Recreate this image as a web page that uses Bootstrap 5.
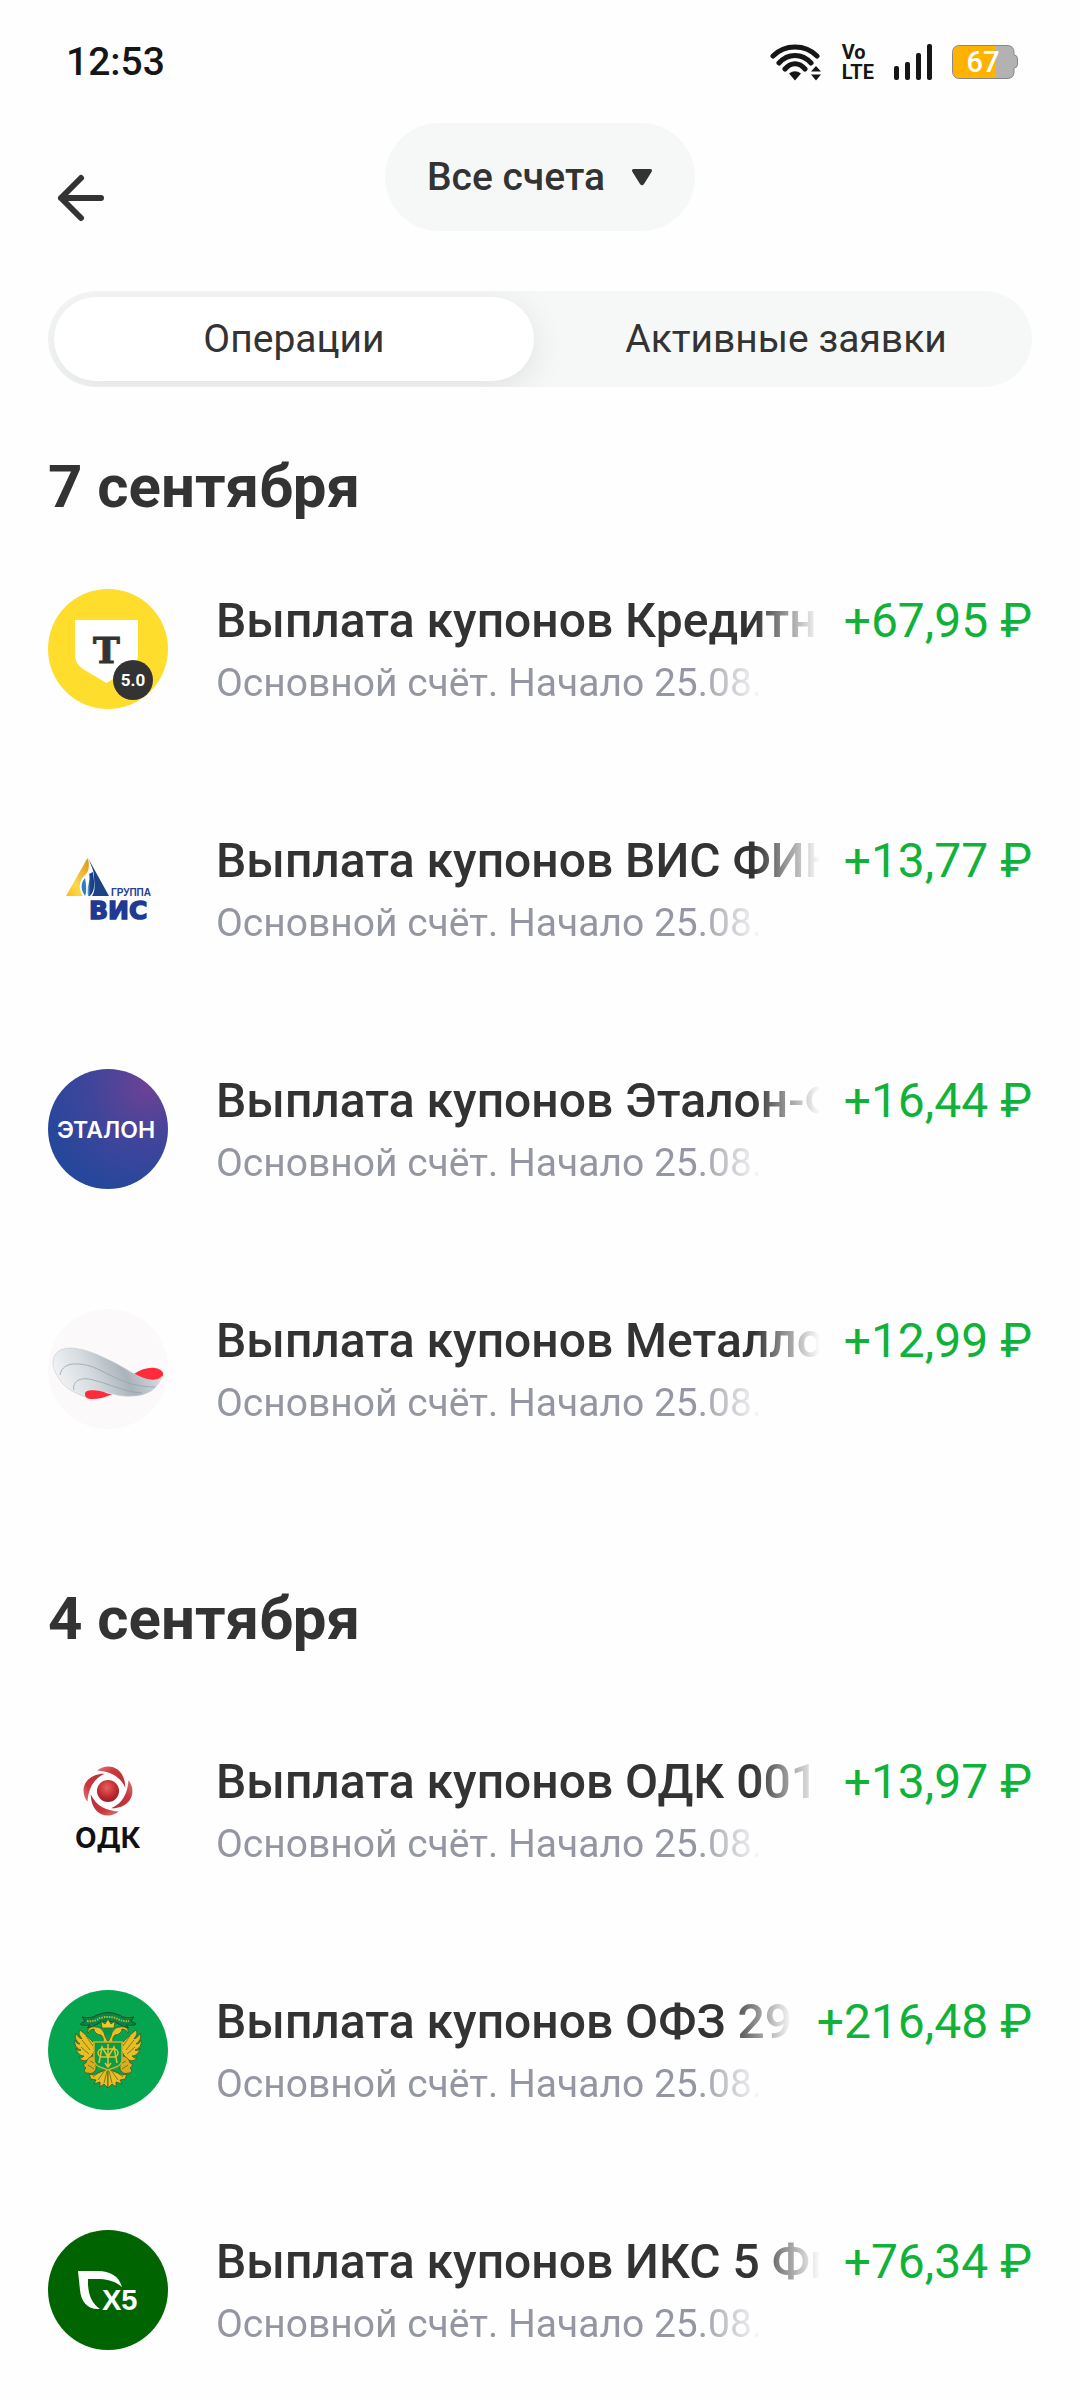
<!DOCTYPE html>
<html lang="ru">
<head>
    <meta charset="UTF-8">
    <meta name="viewport" content="width=device-width, initial-scale=1.0">
    <title>Операции</title>
    <link href="https://cdn.jsdelivr.net/npm/bootstrap@5.3.0/dist/css/bootstrap.min.css" rel="stylesheet">
    <style>
        body {
            font-family: Roboto, "Liberation Sans", sans-serif;
            font-size: 39px;
            line-height: 48px;
            color: #333;
            background: #fefefe;
        }
        .status-bar {
            padding: 38px 62px 0 66px;
            color: #161616;
        }
        .status-icons {
            gap: 20px;
        }
        .volte {
            font: bold 20px/20px Roboto, sans-serif;
        }
        .top-bar {
            display: grid;
            grid-template-columns: 1fr auto 1fr;
            padding: 37px 48px 0;
        }
        .back-btn {
            width: 66px;
            height: 66px;
        }
        .account-btn {
            height: 108px;
            padding: 0 42px;
            gap: 26px;
            font-size: 39px;
            background: #f6f8f8;
        }
        .account-btn, .back-btn, .tab-btn {
            color: #333;
            border: 0;
        }
        .tab-track {
            margin: 60px 48px 0;
            background: #f6f8f8;
        }
        .tab-btn {
            height: 84px;
            margin: 6px;
            font-size: 39px;
        }
        .tab-btn.active {
            color: #333;
            background: #fff;
            border: 0;
            box-shadow: 0 8px 36px rgba(0, 0, 0, .09);
        }
        .day-group {
            padding: 64px 48px 0;
        }
        .day-group h2 {
            margin-bottom: 66px;
            font-size: 60px;
            line-height: 72px;
        }
        .day-group + .day-group {
            padding-top: 150px;
        }
        .day-group + .day-group h2 {
            margin-bottom: 95px;
        }
        .operations {
            gap: 116px;
        }
        .operation {
            gap: 48px;
        }
        .avatar {
            width: 120px;
            height: 120px;
        }
        .op-head {
            gap: 24px;
            font-size: 48px;
            line-height: 64px;
        }
        .op-account {
            width: 67%;
            line-height: 60px;
            color: #9497a1;
        }
        .fade-end {
            -webkit-mask-image: linear-gradient(to left, transparent, #000 66px);
            mask-image: linear-gradient(to left, transparent, #000 66px);
        }
        .amount {
            color: #10b23a;
        }
    </style>
</head>
<body>
    <div class="status-bar d-flex justify-content-between align-items-center">
        <div class="fw-medium">12:53</div>
        <div class="status-icons d-flex align-items-center">
            <svg width="52" height="37" viewBox="0 0 52 37" fill="none" stroke="#161616" stroke-width="5" stroke-linecap="round">
                <path d="M3 12C15 0 35 0 47 12M9 19C18 9 32 9 41 19M15 25C21 18 29 18 35 25"/>
                <path d="M19 29.5Q25 25 31 29.5L25 36.5Z" fill="#161616" stroke="none"/>
                <path d="M41 27.5L46 22L51 27.5ZM41 30.5H51L46 36.5Z" fill="#161616" stroke="none"/>
            </svg>
            <div class="volte">Vo<br>LTE</div>
            <svg width="38" height="36" viewBox="0 0 38 36" fill="#161616">
                <rect x="0" y="22" width="5" height="14" rx="2"/>
                <rect x="11" y="18" width="5" height="18" rx="2"/>
                <rect x="22" y="9" width="5" height="27" rx="2"/>
                <rect x="33" y="0" width="5" height="36" rx="2"/>
            </svg>
            <svg width="66" height="36" viewBox="0 0 66 36">
                <path d="M8 1.5H55Q62 1.5 62 8.5V11Q65.500 11 65.500 15V20Q65.500 24 62 24V28Q62 34.500 55 34.500H8Q.5 34.500 .5 27V8.500Q.5 1.500 8 1.500Z" fill="#b2b2b2" stroke="#888"/>
                <path d="M44 2H8Q1 2 1 9V27Q1 34 8 34H44Z" fill="#ffb300"/>
                <text x="31" y="28" text-anchor="middle" font-family="Roboto" font-size="29" font-weight="500" fill="#fff">67</text>
            </svg>
        </div>
    </div>

    <header class="top-bar align-items-end">
        <button type="button" class="back-btn bg-transparent p-0 d-flex align-items-center justify-content-center" aria-label="Назад">
            <svg width="50" height="50" viewBox="0 0 50 50" fill="none" stroke="#333" stroke-width="6" stroke-linecap="round" stroke-linejoin="round">
                <path d="M45 25H5M25 5L5 25L25 45"/>
            </svg>
        </button>
        <button type="button" class="account-btn btn rounded-pill d-flex align-items-center fw-medium">
            Все счета
            <svg width="22" height="18" viewBox="0 0 22 18" fill="#333"><path d="M3 1H19Q22 1 20.500 4L13 16Q11 18.500 9 16L1.500 4Q0 1 3 1Z"/></svg>
        </button>
    </header>

    <div class="tab-track d-flex rounded-pill overflow-hidden" role="tablist">
        <button type="button" class="tab-btn active btn rounded-pill flex-fill w-50 p-0" role="tab" aria-selected="true">Операции</button>
        <button type="button" class="tab-btn btn rounded-pill flex-fill w-50 p-0" role="tab" aria-selected="false">Активные заявки</button>
    </div>

    <main>
        <section class="day-group">
            <h2 class="fw-bold">7 сентября</h2>
            <ul class="operations list-unstyled d-flex flex-column mb-0">
                <li class="operation d-flex">
                    <svg class="avatar flex-shrink-0" viewBox="0 0 120 120">
                        <circle cx="60" cy="60" r="60" fill="#ffdd2d"/>
                        <path d="M27 31H90V66Q90 75 82 80L58.500 94L35 80Q27 75 27 66Z" fill="#fff"/>
                        <text x="58.500" y="74" text-anchor="middle" font-family="DejaVu Serif" font-size="36" font-weight="bold" fill="#333" stroke="#333">Т</text>
                        <circle cx="85" cy="91" r="20" fill="#333"/>
                        <text x="85" y="97" text-anchor="middle" font-family="Roboto" font-size="17" font-weight="bold" fill="#fff">5.0</text>
                    </svg>
                    <div class="flex-grow-1 overflow-hidden">
                        <div class="op-head d-flex">
                            <div class="fade-end flex-grow-1 overflow-hidden text-nowrap fw-medium">Выплата купонов Кредитн</div>
                            <div class="amount text-nowrap">+67,95 ₽</div>
                        </div>
                        <div class="op-account fade-end overflow-hidden text-nowrap">Основной счёт. Начало 25.08.</div>
                    </div>
                </li>
                <li class="operation d-flex">
                    <svg class="avatar flex-shrink-0" viewBox="0 0 120 120">
                        <defs>
                            <linearGradient id="visGold" x1="0" y1="1" x2="1" y2="0">
                                <stop offset="0" stop-color="#fdb813"/><stop offset=".35" stop-color="#ffd94a"/><stop offset="1" stop-color="#d9931c"/>
                            </linearGradient>
                            <linearGradient id="visBlue" x1="0" y1="0" x2="1" y2="0">
                                <stop offset="0" stop-color="#7cc0e8"/><stop offset=".4" stop-color="#1b4a92"/><stop offset="1" stop-color="#153a80"/>
                            </linearGradient>
                        </defs>
                        <path d="M39.500 29L18 67H35C29 58 32 50 38 45C41 42 42 36 39.500 29Z" fill="url(#visGold)"/>
                        <path d="M40 29L61 67H44C48 61 46 55 46 47C46 42 43 36 40 29Z" fill="#1b4386"/>
                        <path d="M37 49C32 55 33 61 37 67C39 62 38 55 37 49Z" fill="#2c7fc0"/>
                        <path d="M41 45C43 52 38 58 40 67H42C48 61 46 52 45 43Z" fill="url(#visBlue)"/>
                        <text x="63" y="67" font-family="Liberation Sans" font-size="10" font-weight="bold" fill="#26408f">ГРУППА</text>
                        <text x="41" y="90" font-family="DejaVu Sans" font-size="25" font-weight="bold" fill="#1f3a93" stroke="#1f3a93" stroke-width="1.500">ВИС</text>
                    </svg>
                    <div class="flex-grow-1 overflow-hidden">
                        <div class="op-head d-flex">
                            <div class="fade-end flex-grow-1 overflow-hidden text-nowrap fw-medium">Выплата купонов ВИС ФИН</div>
                            <div class="amount text-nowrap">+13,77 ₽</div>
                        </div>
                        <div class="op-account fade-end overflow-hidden text-nowrap">Основной счёт. Начало 25.08.</div>
                    </div>
                </li>
                <li class="operation d-flex">
                    <svg class="avatar flex-shrink-0" viewBox="0 0 120 120">
                        <defs>
                            <radialGradient id="etalonSky" cx=".82" cy=".15" r=".9">
                                <stop offset="0" stop-color="#6b4295"/><stop offset=".5" stop-color="#41459a"/><stop offset="1" stop-color="#26479b"/>
                            </radialGradient>
                        </defs>
                        <circle cx="60" cy="60" r="60" fill="url(#etalonSky)"/>
                        <text x="58" y="69" text-anchor="middle" font-family="Inter" font-size="23" font-weight="600" fill="#fff">ЭТАЛОН</text>
                    </svg>
                    <div class="flex-grow-1 overflow-hidden">
                        <div class="op-head d-flex">
                            <div class="fade-end flex-grow-1 overflow-hidden text-nowrap fw-medium">Выплата купонов Эталон-Ф</div>
                            <div class="amount text-nowrap">+16,44 ₽</div>
                        </div>
                        <div class="op-account fade-end overflow-hidden text-nowrap">Основной счёт. Начало 25.08.</div>
                    </div>
                </li>
                <li class="operation d-flex">
                    <svg class="avatar flex-shrink-0" viewBox="0 0 120 120">
                        <defs>
                            <linearGradient id="steel" x1="0" y1=".6" x2="1" y2=".4">
                                <stop offset="0" stop-color="#f4f6f8"/><stop offset=".35" stop-color="#d3d9de"/><stop offset=".65" stop-color="#a9b3bb"/><stop offset="1" stop-color="#dfe4e8"/>
                            </linearGradient>
                        </defs>
                        <circle cx="60" cy="60" r="60" fill="#fbf9fa"/>
                        <path d="M86 65C93 60 101 58 107 59C114 60 118 65 113 69C110 72 102 72 95 70Z" fill="#ff2a3c"/>
                        <path d="M5 54C5 44 12 39 23 39C40 40 55 48 69 55C82 62 92 70 104 71C109 71 112 70 114 67C110 80 99 87 84 87C73 88 66 85 58 83C51 81 42 81 38 88C26 84 17 79 12 71C8 65 5 60 5 54Z" fill="url(#steel)" stroke="#c3c9ce" stroke-width=".6"/>
                        <path d="M12 66C14 54 27 53 42 57C60 63 76 78 107 78M26 81C24 73 32 67 45 71C62 75 76 83 94 84" fill="none" stroke="#98a2aa" stroke-width=".8"/>
                        <path d="M37 85C37 80 46 81 52 82C58 83 61 86 65 85C58 88 51 90 44 90C39 90 37 88 37 85Z" fill="#ff2a3c"/>
                    </svg>
                    <div class="flex-grow-1 overflow-hidden">
                        <div class="op-head d-flex">
                            <div class="fade-end flex-grow-1 overflow-hidden text-nowrap fw-medium">Выплата купонов Металло</div>
                            <div class="amount text-nowrap">+12,99 ₽</div>
                        </div>
                        <div class="op-account fade-end overflow-hidden text-nowrap">Основной счёт. Начало 25.08.</div>
                    </div>
                </li>
            </ul>
        </section>

        <section class="day-group">
            <h2 class="fw-bold">4 сентября</h2>
            <ul class="operations list-unstyled d-flex flex-column mb-0">
                <li class="operation d-flex">
                    <svg class="avatar flex-shrink-0" viewBox="0 0 120 120">
                        <defs>
                            <radialGradient id="odkBall" cx=".45" cy=".35" r=".7">
                                <stop offset="0" stop-color="#e8625e"/><stop offset=".6" stop-color="#c02a30"/><stop offset="1" stop-color="#8f1c22"/>
                            </radialGradient>
                            <linearGradient id="odkBladeFill" x1="0" y1="0" x2="1" y2="1">
                                <stop offset="0" stop-color="#e07a7c"/><stop offset=".4" stop-color="#c9353b"/><stop offset="1" stop-color="#b3333a"/>
                            </linearGradient>
                            <path id="odkBlade" d="M-10 -19C0 -27 16 -22 16 -3C11 -14 2 -18 -10 -19Z" fill="url(#odkBladeFill)"/>
                        </defs>
                        <g transform="translate(60 41)">
                            <circle r="11" fill="url(#odkBall)"/>
                            <g transform="scale(1.08)">
                                <use href="#odkBlade"/>
                                <use href="#odkBlade" transform="rotate(90)"/>
                                <use href="#odkBlade" transform="rotate(180)"/>
                                <use href="#odkBlade" transform="rotate(270)"/>
                            </g>
                        </g>
                        <text x="60" y="98" text-anchor="middle" font-family="Inter" font-size="28" font-weight="bold" fill="#111">ОДК</text>
                    </svg>
                    <div class="flex-grow-1 overflow-hidden">
                        <div class="op-head d-flex">
                            <div class="fade-end flex-grow-1 overflow-hidden text-nowrap fw-medium">Выплата купонов ОДК 001</div>
                            <div class="amount text-nowrap">+13,97 ₽</div>
                        </div>
                        <div class="op-account fade-end overflow-hidden text-nowrap">Основной счёт. Начало 25.08.</div>
                    </div>
                </li>
                <li class="operation d-flex">
                    <svg class="avatar flex-shrink-0" viewBox="0 0 120 120">
                        <defs>
                            <!-- левая половина орла, правая отражается -->
                            <g id="eagleHalf" stroke="#3c5a1c" stroke-width=".8" stroke-linejoin="round">
                                <path d="M53 45C49 45 46 42 46 39C43 39 41 41 40 43C39 38 43 36 48 37C53 37 56 41 57 46L60 52V55H53C56 51 56 48 53 45Z" fill="#e9bd25"/>
                                <path d="M45 52C41 48 37 44 32 40C30 44 32 46 34 49C31 48 29 46 28 43C26 48 29 52 32 54C29 54 28 52 27 50C26 55 29 59 33 60C31 61 29 60 28 58C29 63 32 66 36 66C34 68 33 68 31 67C34 73 40 71 43 67L47 60H48V53Z" fill="#e9bd25"/>
                                <path d="M46 66C42 66 39 69 38 73C35 73 35 77 38 78C35 80 37 84 40 83C44 85 49 81 48 76Z" fill="#d9ad22"/>
                                <path d="M60 79L55 81L45 85L41 84L43 89L48 90L46 94L52 92L52 97L56 94L60 98Z" fill="#e9bd25"/>
                                <path d="M57 80L50 90M59 81L56 93M54 80L45 87M34 50L42 60M33 57L41 64M38 46L45 56M40 75L46 79M42 71L46 73" fill="none" stroke="#58711b"/>
                            </g>
                        </defs>
                        <circle cx="60" cy="60" r="60" fill="#05a54f"/>
                        <path d="M34 27Q43 29 49 25Q60 20 71 25Q77 29 86 27L83 31L88 34Q86 36 78 35L81 38L74 36Q68 31 60 31Q52 31 46 36L39 38L42 35Q34 36 32 34L37 31Z" fill="#078545" stroke="#174e2b" stroke-width="1"/>
                        <path d="M39 31Q47 32 52 28Q60 26 68 28Q74 32 81 31" fill="none" stroke="#b6b638" stroke-width="2" stroke-dasharray="1.500 1"/>
                        <use href="#eagleHalf"/>
                        <use href="#eagleHalf" transform="translate(120 0) scale(-1 1)"/>
                        <path d="M54 38L53 31L57 34L60 29L63 34L67 31L66 38Z" fill="#f3c72b" stroke="#3c5a1c" stroke-width=".8"/>
                        <path d="M56 39H64V43L60 46L56 43Z" fill="#05984a"/>
                        <path d="M46 52H74V69Q74 75 68 77L60 80L52 77Q46 75 46 69Z" fill="#079b4b" stroke="#c9b22a" stroke-width="1.500"/>
                        <path d="M60 54V76M57 73L60 77L63 73M51 73L54 57L60 67L66 57L69 73" fill="none" stroke="#ebc12a" stroke-width="1.500"/>
                        <path d="M54 59A4 4 0 0 0 54 67H66A4 4 0 0 0 66 59Z" fill="none" stroke="#ebc12a" stroke-width="1.500"/>
                    </svg>
                    <div class="flex-grow-1 overflow-hidden">
                        <div class="op-head d-flex">
                            <div class="fade-end flex-grow-1 overflow-hidden text-nowrap fw-medium">Выплата купонов ОФЗ 29</div>
                            <div class="amount text-nowrap">+216,48 ₽</div>
                        </div>
                        <div class="op-account fade-end overflow-hidden text-nowrap">Основной счёт. Начало 25.08.</div>
                    </div>
                </li>
                <li class="operation d-flex">
                    <svg class="avatar flex-shrink-0" viewBox="0 0 120 120">
                        <circle cx="60" cy="60" r="60" fill="#006400"/>
                        <path d="M30 41H50C62 41 71 46 74 57C66 50 57 49 49 49H40V53C40 64 44 74 52 79C40 80 33 72 32 60Z" fill="#fff"/>
                        <text x="54" y="80" font-family="Liberation Sans" font-size="29" font-weight="bold" fill="#fff">X5</text>
                    </svg>
                    <div class="flex-grow-1 overflow-hidden">
                        <div class="op-head d-flex">
                            <div class="fade-end flex-grow-1 overflow-hidden text-nowrap fw-medium">Выплата купонов ИКС 5 Фи</div>
                            <div class="amount text-nowrap">+76,34 ₽</div>
                        </div>
                        <div class="op-account fade-end overflow-hidden text-nowrap">Основной счёт. Начало 25.08.</div>
                    </div>
                </li>
            </ul>
        </section>
    </main>

    <script src="https://cdn.jsdelivr.net/npm/bootstrap@5.3.0/dist/js/bootstrap.bundle.min.js"></script>
</body>
</html>
